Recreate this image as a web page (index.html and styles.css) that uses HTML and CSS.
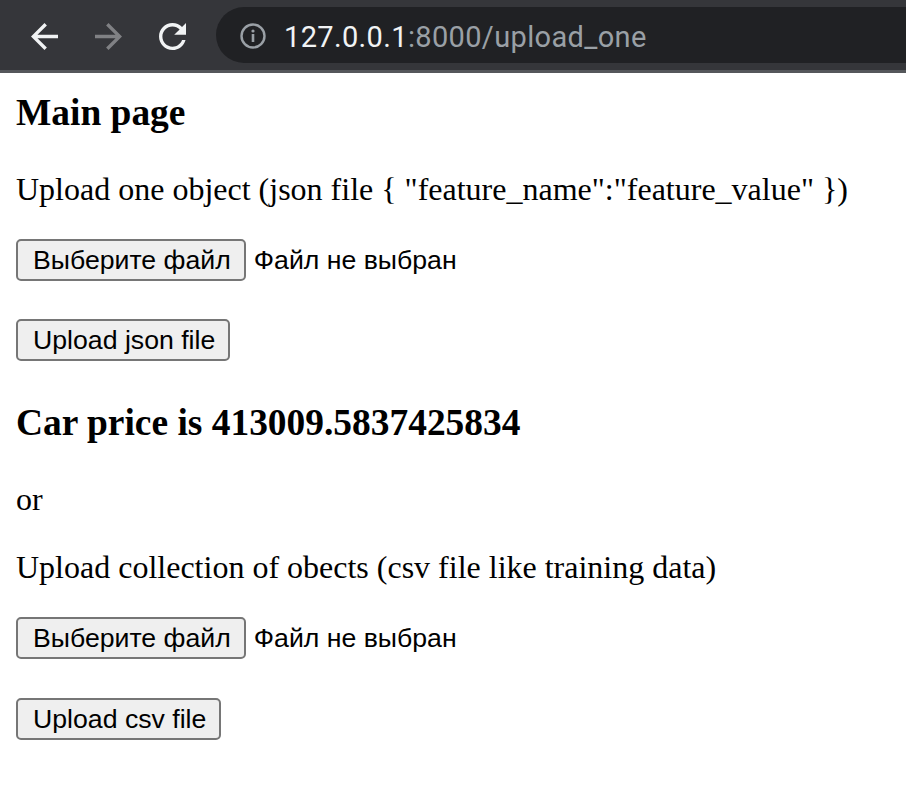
FILE: index.html
```html
<!DOCTYPE html>
<html lang="ru">
<head>
<meta charset="utf-8">
<title>upload_one</title>
<link rel="stylesheet" href="styles.css">
</head>
<body>
<header class="toolbar">
  <div class="nav">
    <svg class="nav-icon back" viewBox="4 4 16 16" width="27" height="27"><path d="M20 11H7.83l5.59-5.59L12 4l-8 8 8 8 1.41-1.41L7.83 13H20v-2z"/></svg>
    <svg class="nav-icon fwd" viewBox="4 4 16 16" width="27" height="27"><path d="M12 4l-1.41 1.41L16.17 11H4v2h12.17l-5.58 5.59L12 20l8-8z"/></svg>
    <svg class="nav-icon reload" viewBox="4 4 16 16" width="27" height="27"><path d="M17.65 6.35C16.2 4.9 14.21 4 12 4c-4.42 0-7.990 3.58-7.99 8s3.57 8 7.99 8c3.73 0 6.84-2.55 7.730-6h-2.08c-.82 2.330-3.04 4-5.65 4-3.310 0-6-2.69-6-6s2.69-6 6-6c1.66 0 3.14.69 4.22 1.78L13 11h7V4l-2.35 2.35z"/></svg>
  </div>
  <div class="omnibox">
    <svg class="info" viewBox="0 0 28 28" width="28" height="28"><circle cx="14" cy="14" r="11.5" fill="none" stroke="#9aa0a6" stroke-width="2.4"/><circle cx="14" cy="9" r="1.6" fill="#9aa0a6"/><rect x="12.7" y="12" width="2.6" height="8" fill="#9aa0a6"/></svg>
    <span class="url"><span class="host">127.0.0.1</span><span class="rest">:8000/upload_one</span></span>
  </div>
</header>
<main class="page">
  <h3 class="title">Main page</h3>
  <p class="text first">Upload one object (json file { "feature_name":"feature_value" })</p>
  <form class="upload">
    <div class="file-row"><span class="btn">Выберите файл</span><span class="file-status">Файл не выбран</span></div>
    <div class="submit-row"><button type="button" class="btn">Upload json file</button></div>
  </form>
  <h3 class="title result">Car price is 413009.5837425834</h3>
  <p class="text or">or</p>
  <p class="text coll">Upload collection of obects (csv file like training data)</p>
  <form class="upload">
    <div class="file-row"><span class="btn">Выберите файл</span><span class="file-status">Файл не выбран</span></div>
    <div class="submit-row last"><button type="button" class="btn">Upload csv file</button></div>
  </form>
</main>
</body>
</html>
```
FILE: styles.css
```css
html, body {
  margin: 0;
  padding: 0;
  background: #ffffff;
}
body {
  font-family: "Liberation Serif", "Times New Roman", serif;
  color: #000;
}
.toolbar {
  height: 70px;
  background: #35363a;
  border-bottom: 3px solid #55575b;
  display: flex;
  align-items: center;
  overflow: hidden;
}
.nav {
  display: flex;
  align-items: center;
  gap: 37px;
  padding-left: 31px;
  margin-top: 3px;
  width: 185px;
  flex: none;
}
.nav-icon { display: block; }
.back, .reload { fill: #f1f3f4; }
.fwd { fill: #808184; }
.omnibox {
  flex: 1;
  height: 56px;
  background: #202124;
  border-radius: 28px 0 0 28px;
  display: flex;
  align-items: center;
  padding-left: 23px;
}
.info { display: block; flex: none; margin-top: 2px; }
.url {
  margin-left: 17px;
  margin-top: 3px;
  font-family: Roboto, "Liberation Sans", sans-serif;
  font-size: 29px;
  letter-spacing: 0.35px;
}
.host { color: #f1f3f4; }
.rest { color: #9aa0a6; }

.page {
  padding: 0 16px;
}
.title {
  font-size: 37.44px;
  font-weight: bold;
  line-height: 41px;
  margin: 19px 0 0;
}
.title.result { margin-top: 41px; }
.text {
  font-size: 32px;
  line-height: 35px;
  margin: 39px 0 0;
}
.text.or { margin-top: 39px; }
.text.coll { margin-top: 33px; }
.upload {
  display: flex;
  flex-direction: column;
  align-items: flex-start;
  margin: 32px 0 0;
}
.file-row {
  display: flex;
  align-items: center;
  gap: 8px;
}
.submit-row { margin-top: 38px; }
.submit-row.last { margin-top: 39px; }
.btn {
  box-sizing: border-box;
  height: 42px;
  display: inline-flex;
  align-items: center;
  padding: 0 13px 0 15px;
  border: 2px solid #767676;
  border-radius: 5px;
  background: #efefef;
  font-family: "Liberation Sans", Arial, sans-serif;
  font-size: 26.67px;
  color: #000;
  line-height: 1;
}
.file-status {
  font-family: "Liberation Sans", Arial, sans-serif;
  font-size: 26.67px;
}
```
